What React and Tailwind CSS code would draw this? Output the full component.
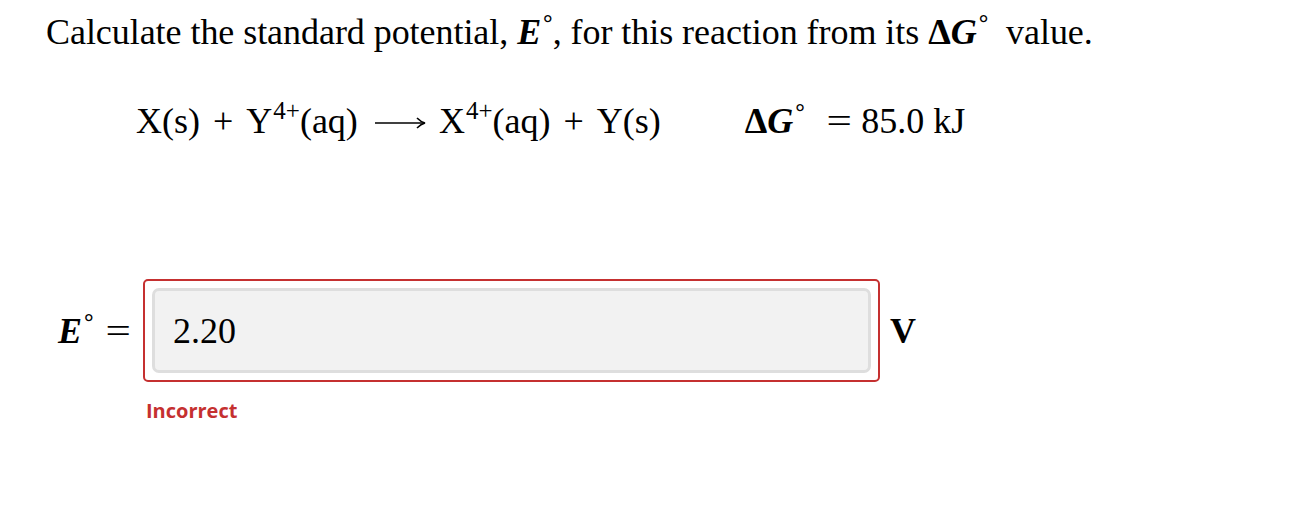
import React from 'react';

const serif = { fontFamily: '"Liberation Serif", "Times New Roman", serif' };

// raised degree mark, kept out of the line box
const Deg = ({ className = '' }) => (
  <span className={`relative -top-[13px] text-[24px] font-bold leading-none ${className}`}>°</span>
);

const Sup = ({ children }) => (
  <span className="relative -top-[14px] text-[25px] leading-none ml-[1px]">{children}</span>
);

const LongArrow = () => (
  <svg width="51" height="14" viewBox="0 0 51 14" className="ml-[17px] mr-[13px] self-center relative top-[2px]">
    <line x1="0" y1="7" x2="49" y2="7" stroke="black" strokeWidth="1.6" />
    <path d="M42 2 Q46 6 50 7 Q46 8 42 12" fill="none" stroke="black" strokeWidth="1.6" />
  </svg>
);

export default function App() {
  return (
    <div className="w-[1292px] h-[532px] bg-white text-black" style={serif}>
      <div className="pl-[46px] pt-[10px]">
        {/* Question */}
        <p className="text-[36px] leading-[44px] tracking-[-0.05px]">
          Calculate the standard potential, <i className="font-bold">E</i>
          <Deg className="ml-[2px]" />, for this reaction from its{' '}
          <b>Δ<i>G</i></b>
          <Deg className="ml-[2px]" />&nbsp; value.
        </p>

        {/* Reaction */}
        <div className="flex items-baseline mt-[45px] ml-[90px] text-[36px] leading-[44px]">
          <span>X(s)</span>
          <span className="mx-[13px]">+</span>
          <span>
            Y<Sup>4+</Sup>(aq)
          </span>
          <LongArrow />
          <span>
            X<Sup>4+</Sup>(aq)
          </span>
          <span className="mx-[13px]">+</span>
          <span>Y(s)</span>
          <span className="ml-[84px]">
            <b>Δ<i>G</i></b>
            <Deg className="ml-[2px]" />
          </span>
          <span className="ml-[24px] mr-[12px] inline-block scale-x-125">=</span>
          <span>85.0 kJ</span>
        </div>

        {/* Answer */}
        <div className="flex items-center mt-[136px] ml-[12px]">
          <div className="w-[85px] flex items-baseline text-[36px] leading-[44px]">
            <i className="font-bold">E</i>
            <Deg className="ml-[2px]" />
            <span className="ml-[14px] inline-block scale-x-125">=</span>
          </div>
          <div className="w-[737px] h-[103px] border-2 border-[#c53030] rounded-[5px] p-[7px]">
            <div className="h-full bg-[#f2f2f2] border-[3px] border-[#dedede] rounded-[7px] flex items-center pl-[18px] text-[36px]">
              2.20
            </div>
          </div>
          <span className="ml-[10px] text-[36px] font-bold">V</span>
        </div>
        <div
          className="ml-[100px] mt-[15px] text-[20px] leading-[28px] font-bold text-[#c53030]"
          style={{ fontFamily: '"Open Sans", sans-serif' }}
        >
          Incorrect
        </div>
      </div>
    </div>
  );
}
